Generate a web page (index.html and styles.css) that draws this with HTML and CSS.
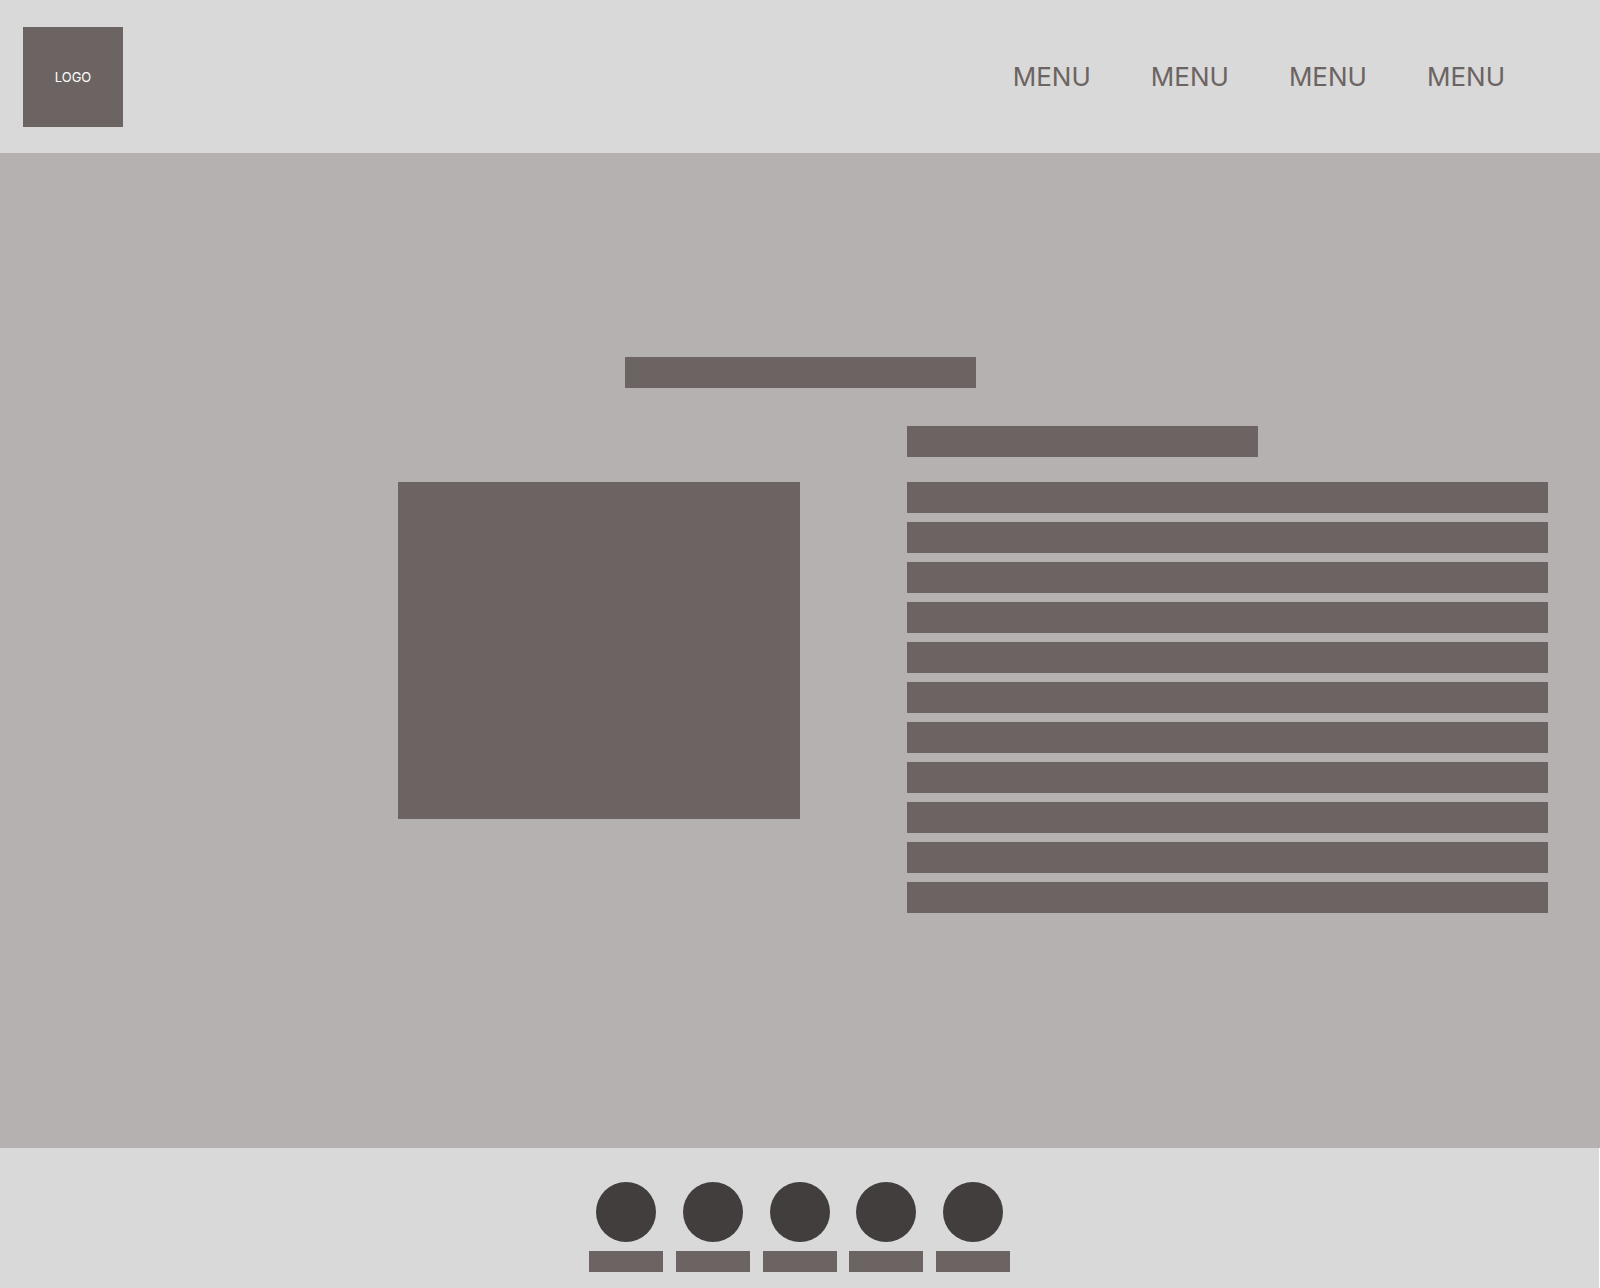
FILE: index.html
```html
<!DOCTYPE html>
<html lang="en">
<head>
  <meta charset="utf-8">
  <meta name="viewport" content="width=device-width, initial-scale=1">
  <title>Wireframe</title>
  <link rel="stylesheet" href="styles.css">
</head>
<body>
  <header class="site-header">
    <a class="logo" href="#">LOGO</a>
    <nav class="menu">
      <a class="menu-link" href="#">MENU</a>
      <a class="menu-link" href="#">MENU</a>
      <a class="menu-link" href="#">MENU</a>
      <a class="menu-link" href="#">MENU</a>
    </nav>
  </header>

  <main class="content">
    <div class="bar title"></div>
    <section class="article">
      <div class="bar subtitle"></div>
      <div class="media"></div>
      <div class="lines">
        <div class="bar"></div>
        <div class="bar"></div>
        <div class="bar"></div>
        <div class="bar"></div>
        <div class="bar"></div>
        <div class="bar"></div>
        <div class="bar"></div>
        <div class="bar"></div>
        <div class="bar"></div>
        <div class="bar"></div>
        <div class="bar"></div>
      </div>
    </section>
  </main>

  <footer class="site-footer">
    <div class="contacts">
      <div class="contact"><div class="dot"></div><div class="label"></div></div>
      <div class="contact"><div class="dot"></div><div class="label"></div></div>
      <div class="contact"><div class="dot"></div><div class="label"></div></div>
      <div class="contact"><div class="dot"></div><div class="label"></div></div>
      <div class="contact"><div class="dot"></div><div class="label"></div></div>
    </div>
  </footer>
</body>
</html>
```

FILE: styles.css
```css
* {
  box-sizing: border-box;
}

body {
  display: flex;
  flex-direction: column;
  min-height: 100vh;
  margin: 0;
  background: #b5b1b0;
  font-family: Inter, "Liberation Sans", sans-serif;
}

.site-header {
  display: flex;
  align-items: center;
  justify-content: space-between;
  padding: 27px 95px 26px 23px;
  background: #d9d9d9;
}

.logo {
  display: flex;
  align-items: center;
  justify-content: center;
  width: 100px;
  height: 100px;
  background: #6c6462;
  color: #fff;
  font-size: 13px;
  line-height: 16px;
  text-decoration: none;
}

.menu {
  display: flex;
  gap: 60px;
}

.menu-link {
  color: #6c6462;
  font-size: 26px;
  line-height: 34px;
  text-decoration: none;
}

.content {
  flex: 1;
  display: flex;
  flex-direction: column;
  gap: 38px;
  padding: 204px 52px 235px;
}

.bar {
  height: 31px;
  background: #6c6462;
}

.title,
.subtitle {
  width: 351px;
}

.title {
  align-self: center;
}

.article {
  display: grid;
  grid-template-columns: 402fr 641fr;
  gap: 25px 107px;
  align-items: start;
  padding-left: 346px;
}

.subtitle,
.lines {
  grid-column: 2;
}

.media {
  height: 337px;
  background: #6c6462;
}

.lines {
  display: flex;
  flex-direction: column;
  gap: 9px;
}

.site-footer {
  display: flex;
  justify-content: center;
  margin-right: 1px;
  padding: 34px 0 16px;
  background: #d9d9d9;
  box-shadow: 1px 0 #fff;
}

.contacts {
  display: flex;
  justify-content: space-between;
  width: 421px;
}

.contact {
  display: flex;
  flex-direction: column;
  align-items: center;
  gap: 9px;
}

.dot {
  width: 60px;
  height: 60px;
  border-radius: 50%;
  background: #423e3d;
}

.label {
  width: 74px;
  height: 21px;
  background: #6c6462;
}
```
